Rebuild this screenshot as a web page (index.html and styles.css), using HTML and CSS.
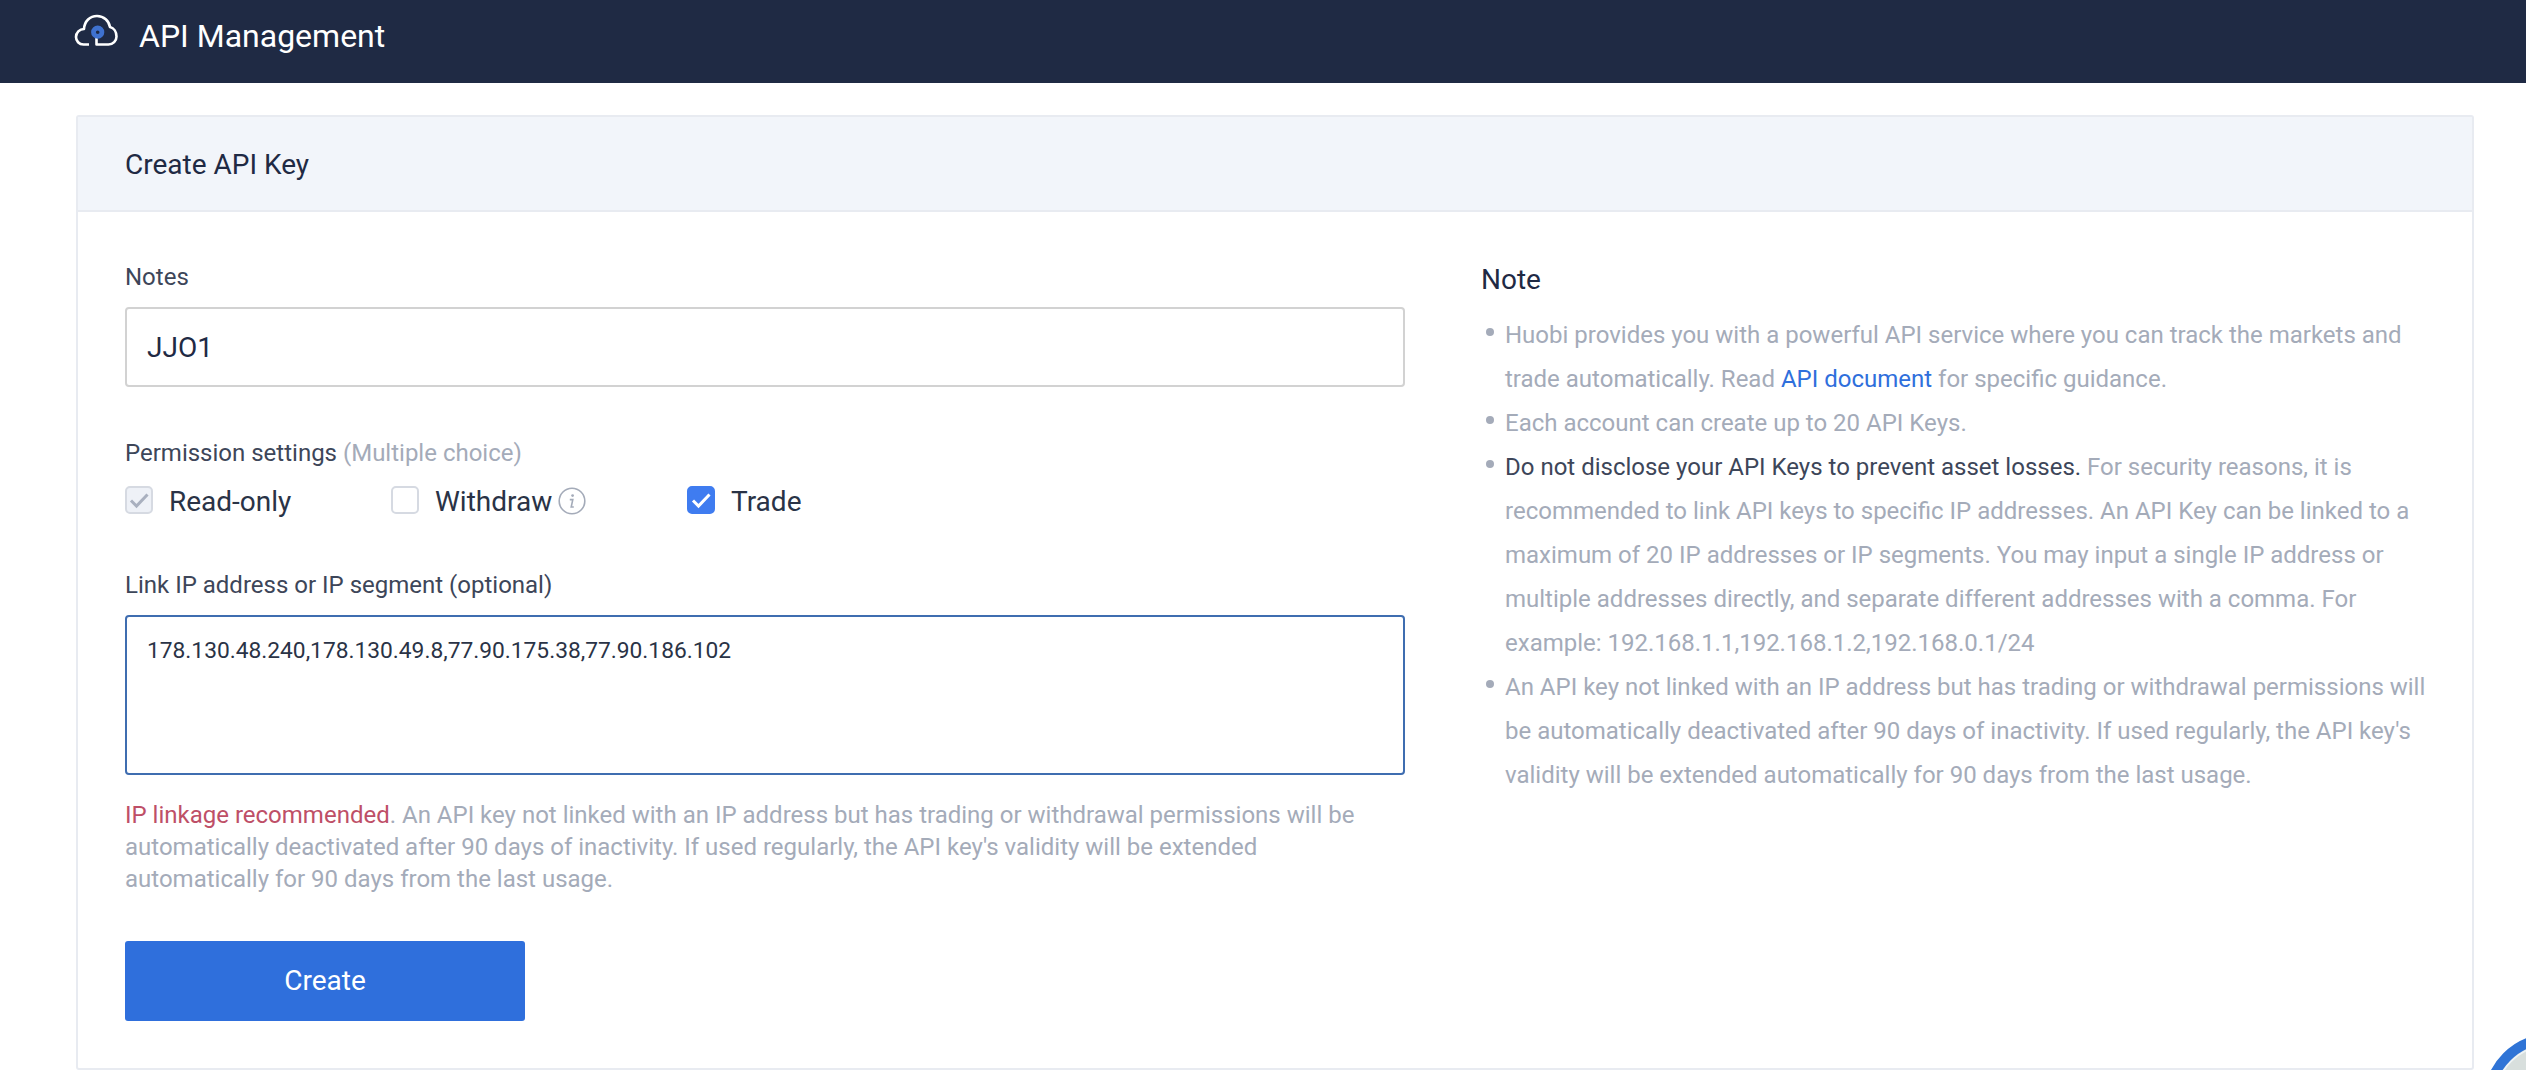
FILE: index.html
```html
<!DOCTYPE html>
<html lang="en">
<head>
<meta charset="utf-8">
<title>API Management</title>
<link rel="stylesheet" href="styles.css">
</head>
<body>
<header class="topbar">
  <svg class="logo" viewBox="14 14 45 35" width="45" height="35" aria-hidden="true">
    <path class="logo-cloud" d="M29 45.5H23.5C19 45.5 16 42 16 38C16 33.5 19.5 30 24 30C24.5 22 30 17 37 17C44 17 49 22 50 28C54 29 56.5 33 56.5 37.5C56.5 42 53 45.5 48.5 45.5H36.5V37"/>
    <circle class="logo-dot" cx="37.7" cy="33.2" r="4.2"/>
  </svg>
  <h1 class="topbar-title">API Management</h1>
</header>
<main class="page">
  <section class="card">
    <h2 class="card-head">Create API Key</h2>
    <div class="card-body">
      <form class="form">
        <div class="label label-notes">Notes</div>
        <div class="input">JJO1</div>
        <div class="label label-perm">Permission settings <span class="muted">(Multiple choice)</span></div>
        <div class="checks">
          <div class="check check-read"><span class="box box-disabled"><svg viewBox="0 0 28 28"><path d="M6 14.5l5.5 5.5L22.5 8.5"/></svg></span>Read-only</div>
          <div class="check check-withdraw"><span class="box"></span>Withdraw<svg class="info" viewBox="0 0 28 28"><circle cx="14" cy="14" r="12.8"/><circle class="info-dot" cx="14.6" cy="8.6" r="1.4"/><path d="M11.8 12.6h3l-1.6 7.4h2.6"/></svg></div>
          <div class="check check-trade"><span class="box box-on"><svg viewBox="0 0 28 28"><path d="M6 14.5l5.5 5.5L22.5 8.5"/></svg></span>Trade</div>
        </div>
        <div class="label label-ip">Link IP address or IP segment (optional)</div>
        <div class="textarea">178.130.48.240,178.130.49.8,77.90.175.38,77.90.186.102</div>
        <p class="hint"><span class="warn">IP linkage recommended</span>. An API key not linked with an IP address but has trading or withdrawal permissions will be automatically deactivated after 90 days of inactivity. If used regularly, the API key's validity will be extended automatically for 90 days from the last usage.</p>
        <div class="button">Create</div>
      </form>
      <aside class="note">
        <h3 class="note-title">Note</h3>
        <ul class="note-list">
          <li>Huobi provides you with a powerful API service where you can track the markets and trade automatically. Read <a class="link">API document</a> for specific guidance.</li>
          <li>Each account can create up to 20 API Keys.</li>
          <li><strong class="strong">Do not disclose your API Keys to prevent asset losses.</strong> For security reasons, it is recommended to link API keys to specific IP addresses. An API Key can be linked to a maximum of 20 IP addresses or IP segments. You may input a single IP address or multiple addresses directly, and separate different addresses with a comma. For example: 192.168.1.1,192.168.1.2,192.168.0.1/24</li>
          <li>An API key not linked with an IP address but has trading or withdrawal permissions will be automatically deactivated after 90 days of inactivity. If used regularly, the API key's validity will be extended automatically for 90 days from the last usage.</li>
        </ul>
      </aside>
    </div>
  </section>
</main>
<div class="float-clip"><div class="float-btn"></div></div>
</body>
</html>
```
FILE: styles.css
```css
* { box-sizing: border-box; }
html, body { margin: 0; height: 100%; overflow: hidden; background: #fff; }
body { font-family: Roboto, "Liberation Sans", sans-serif; color: #1f2a44; position: relative; }
.topbar { height: 83px; background: #1f2a44; display: flex; align-items: center; padding: 0 0 14px 74px; gap: 20px; }
.logo { flex: none; margin-top: -8px; }
.logo-cloud { fill: none; stroke: #fff; stroke-width: 2.6; stroke-linejoin: round; }
.logo-dot { fill: #1f2a44; stroke: #3f72d0; stroke-width: 4.8; }
.topbar-title { margin: 0; color: #fff; font-size: 32px; font-weight: 400; line-height: 36px; padding-top: 2px; }
.page { padding: 32px 52px 0 76px; }
.card { border: 2px solid #e8ebf1; border-radius: 3px; height: 955px; }
.card-head { margin: 0; height: 95px; background: #f2f5fa; border-bottom: 2px solid #e8ebf1; padding-left: 47px; font-size: 28px; font-weight: 400; line-height: 95px; color: #1f2a44; }
.card-body { display: flex; padding: 0 47px; }
.form { width: 1280px; flex: none; }
.label { font-size: 24px; line-height: 28px; color: #3d4659; }
.label-notes { padding-top: 51px; }
.input { height: 80px; margin-top: 16px; border: 2px solid #d2d2d2; border-radius: 4px; padding-left: 20px; font-size: 28px; line-height: 78px; color: #1f2a44; }
.label-perm { margin-top: 52px; }
.muted { color: #a4abb9; }
.checks { display: flex; height: 28px; margin-top: 19px; font-size: 28px; line-height: 31px; color: #2a3346; }
.check { display: flex; align-items: flex-start; gap: 16px; }
.check-read { width: 266px; }
.check-withdraw { width: 296px; }
.box { width: 28px; height: 28px; border: 2px solid #d6dae2; border-radius: 5px; background: #fff; display: block; }
.box svg { display: block; width: 28px; height: 28px; margin: -2px; fill: none; stroke-width: 3; }
.box-disabled { background: #eef1f7; }
.box-disabled svg { stroke: #a9b0bf; }
.box-on { background: #3f7cf0; border-color: #3f7cf0; }
.box-on svg { stroke: #fff; }
.info { width: 28px; height: 28px; margin: 1px 0 0 -10px; fill: none; stroke: #a4abb9; stroke-width: 1.6; }
.info-dot { fill: #a4abb9; stroke: none; }
.label-ip { margin-top: 57px; }
.textarea { height: 160px; margin-top: 16px; border: 2px solid #3f6db0; border-radius: 4px; padding: 20px 20px; font-size: 22.75px; line-height: 28px; color: #2a3346; }
.hint { margin: 24px 0 0; font-size: 24px; line-height: 32px; color: #a4abb9; }
.warn { color: #be4f67; }
.button { width: 400px; height: 80px; margin-top: 46px; background: #2f6fdc; border-radius: 3px; color: #fff; font-size: 28px; line-height: 80px; text-align: center; }
.note { margin-left: 76px; width: 950px; flex: none; }
.note-title { margin: 0; padding-top: 50px; font-size: 28px; font-weight: 400; line-height: 36px; color: #1f2a44; }
.note-list { list-style: none; margin: 15px 0 0; padding: 0; font-size: 24px; line-height: 44px; color: #a4abb9; }
.note-list li { position: relative; padding-left: 24px; }
.note-list li::before { content: ""; position: absolute; left: 5px; top: 15px; width: 8px; height: 8px; border-radius: 50%; background: #a4abb9; }
.link { color: #2f6fdc; }
.strong { font-weight: 400; color: #3d4659; }
.float-clip { position: absolute; right: 0; bottom: 0; width: 42px; height: 36px; overflow: hidden; }
.float-btn { position: absolute; left: 0; top: 0; width: 132px; height: 132px; border-radius: 50%; border: 10px solid #2f74d6; background: #d8dfdd; box-shadow: inset 0 0 0 2px #eef3f5; }
```
